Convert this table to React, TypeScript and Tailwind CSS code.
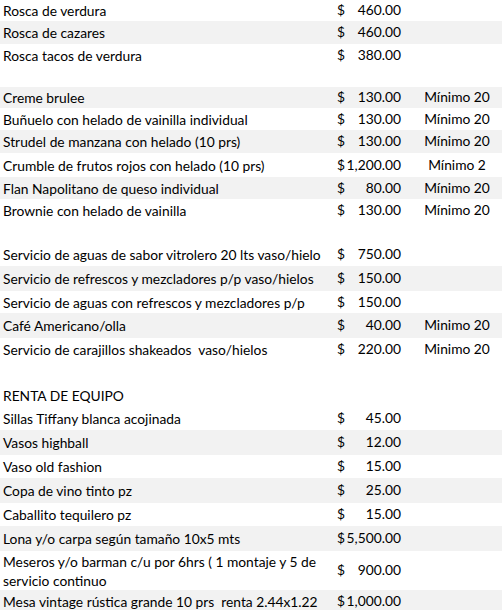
type Row = { name?: string; price?: string; note?: string; h: number; gray?: boolean };

const rows: Row[] = [
  { name: 'Rosca de verdura', price: '460.00', h: 21 },
  { name: 'Rosca de cazares', price: '460.00', h: 23, gray: true },
  { name: 'Rosca tacos de verdura', price: '380.00', h: 22 },
  { h: 21 },
  { name: 'Creme brulee', price: '130.00', note: 'Mínimo 20', h: 21, gray: true },
  { name: 'Buñuelo con helado de vainilla individual', price: '130.00', note: 'Mínimo 20', h: 22 },
  { name: 'Strudel de manzana con helado (10 prs)', price: '130.00', note: 'Mínimo 20', h: 23, gray: true },
  { name: 'Crumble de frutos rojos con helado (10 prs)', price: '1,200.00', note: 'Mínimo 2', h: 24 },
  { name: 'Flan Napolitano de queso individual', price: '80.00', note: 'Mínimo 20', h: 22, gray: true },
  { name: 'Brownie con helado de vainilla', price: '130.00', note: 'Mínimo 20', h: 22 },
  { h: 22 },
  { name: 'Servicio de aguas de sabor vitrolero 20 lts vaso/hielo', price: '750.00', h: 23 },
  { name: 'Servicio de refrescos y mezcladores p/p vaso/hielos', price: '150.00', h: 25, gray: true },
  { name: 'Servicio de aguas con refrescos y mezcladores p/p', price: '150.00', h: 22 },
  { name: 'Café Americano/olla', price: '40.00', note: 'Minimo 20', h: 25, gray: true },
  { name: 'Servicio de carajillos shakeados  vaso/hielos', price: '220.00', note: 'Minimo 20', h: 23 },
  { h: 23 },
  { name: 'RENTA DE EQUIPO', h: 23 },
  { name: 'Sillas Tiffany blanca acojinada', price: '45.00', h: 23 },
  { name: 'Vasos highball', price: '12.00', h: 25, gray: true },
  { name: 'Vaso old fashion', price: '15.00', h: 23 },
  { name: 'Copa de vino tinto pz', price: '25.00', h: 25, gray: true },
  { name: 'Caballito tequilero pz', price: '15.00', h: 23 },
  { name: 'Lona y/o carpa según tamaño 10x5 mts', price: '5,500.00', h: 25, gray: true },
  { name: 'Meseros y/o barman c/u por 6hrs ( 1 montaje y 5 de servicio continuo', price: '900.00', h: 39 },
  { name: 'Mesa vintage rústica grande 10 prs  renta 2.44x1.22', price: '1,000.00', h: 22, gray: true },
];

export default function App() {
  return (
    <div className="w-[502px] h-[610px] overflow-hidden bg-white text-black text-[13.8px] font-['Lato','Open_Sans',sans-serif]">
      {rows.map((r, i) => (
        <div
          key={i}
          style={{ height: r.h }}
          className={`grid grid-cols-[334px_78px_1fr] items-center ${r.gray ? 'bg-[#f2f2f2]' : 'bg-white'}`}
        >
          <div className={`pl-[3px] pr-1 leading-[19px] ${r.h > 30 ? 'whitespace-normal' : 'whitespace-pre overflow-hidden'}`}>
            {r.name}
          </div>
          <div className="flex justify-between pl-[3px] pr-[11px]">
            {r.price && (
              <>
                <span>$</span>
                <span>{r.price}</span>
              </>
            )}
          </div>
          <div className="text-center">{r.note}</div>
        </div>
      ))}
    </div>
  );
}
